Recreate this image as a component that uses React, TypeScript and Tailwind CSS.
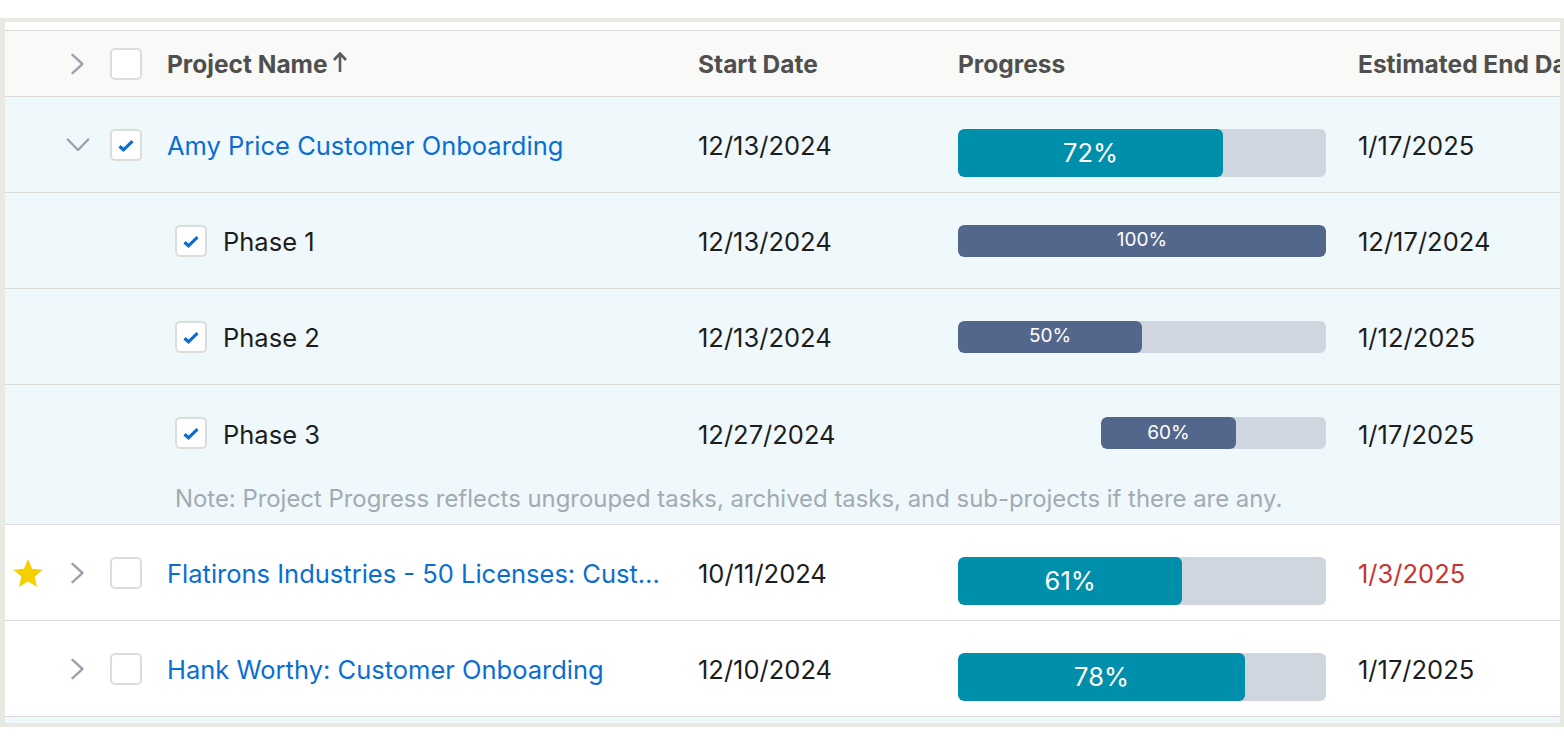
import type { ReactNode } from "react";

const FONT = { fontFamily: "Inter, 'Noto Sans', Arial, sans-serif" };

function Chevron({ down = false }: { down?: boolean }) {
  return (
    <svg
      viewBox="0 0 24 24"
      className="h-[24px] w-[24px]"
      fill="none"
      stroke="#9aa3ad"
      strokeWidth={2.4}
      strokeLinecap="round"
      strokeLinejoin="round"
    >
      {down ? <path d="M1.8 6.5L12 17 22.2 6.5" /> : <path d="M6.5 2.8L16.5 12 6.5 21.2" />}
    </svg>
  );
}

function Checkbox({ checked = false }: { checked?: boolean }) {
  return (
    <div className="flex h-[32px] w-[32px] flex-none items-center justify-center rounded-[5px] border-2 border-[#dddcdc] bg-white">
      {checked && (
        <svg
          viewBox="0 0 16 16"
          className="mt-[2px] h-[16px] w-[16px]"
          fill="none"
          stroke="#0b6fd0"
          strokeWidth={3.2}
          strokeLinejoin="miter"
        >
          <path d="M1.5 8.2l4 3.6 9-8.6" />
        </svg>
      )}
    </div>
  );
}

function Star() {
  return (
    <svg viewBox="0 0 24 24" className="h-[32px] w-[32px]" fill="#f5d000">
      <path d="M12 1.5l3.1 7.3 7.9.7-6 5.2 1.8 7.8L12 18.4l-6.8 4.1L7 14.7 1 9.5l7.9-.7z" />
    </svg>
  );
}

function Bar({
  pct,
  big = false,
  offset = 0,
  width = 368,
}: {
  pct: number;
  big?: boolean;
  offset?: number;
  width?: number;
}) {
  return (
    <div className={`flex w-[368px] ${big ? "mt-4" : ""}`}>
      <div style={{ width: offset }} className="flex-none" />
      <div
        style={{ width }}
        className={`flex overflow-hidden rounded-[6px] bg-[#cfd6e0] ${big ? "h-[48px]" : "h-[32px]"}`}
      >
        <div
          style={{ width: `${pct}%` }}
          className={`flex items-center justify-center rounded-[6px] text-white ${
            big ? "bg-[#008fab] pt-[2px] text-[25.5px]" : "bg-[#53668b] text-[19px]"
          }`}
        >
          {pct}%
        </div>
      </div>
    </div>
  );
}

function Row({
  bg = "bg-white",
  lead,
  start,
  bar,
  end,
  endRed = false,
}: {
  bg?: string;
  lead: ReactNode;
  start: string;
  bar: ReactNode;
  end: string;
  endRed?: boolean;
}) {
  return (
    <div className={`flex h-[96px] flex-none items-center border-b border-[#dddada] ${bg}`}>
      {lead}
      <div className="w-[260px] flex-none pt-[4px] text-[25.5px] text-[#1d1d1d]">{start}</div>
      <div className="flex w-[400px] flex-none">{bar}</div>
      <div
        className={`w-[300px] flex-none pt-[4px] text-[25.5px] ${endRed ? "text-[#c8342f]" : "text-[#1d1d1d]"}`}
      >
        {end}
      </div>
    </div>
  );
}

function ParentLead({
  star = false,
  open = false,
  checked = false,
  name,
}: {
  star?: boolean;
  open?: boolean;
  checked?: boolean;
  name: string;
}) {
  return (
    <div className="flex w-[693px] flex-none items-center">
      <div className="flex w-[45px] flex-none justify-center">{star && <Star />}</div>
      <div className="flex w-[55px] flex-none justify-center">
        <Chevron down={open} />
      </div>
      <div className="ml-[5px]">
        <Checkbox checked={checked} />
      </div>
      <div className="ml-[25px] w-[531px] flex-none pr-[32px] pt-[4px]">
        <div className="truncate text-[25.5px] text-[#0a6ed1]">{name}</div>
      </div>
    </div>
  );
}

function PhaseLead({ name }: { name: string }) {
  return (
    <div className="flex w-[693px] flex-none items-center pl-[170px]">
      <Checkbox checked />
      <div className="ml-[16px] pt-[4px] text-[25.5px] text-[#1d1d1d]">{name}</div>
    </div>
  );
}

export default function App() {
  return (
    <div className="min-h-screen bg-white pt-[18px]" style={FONT}>
      <div className="flex h-[709px] flex-col overflow-hidden border-4 border-l-[5px] border-[#e9e9e4] pt-[8px]">
        {/* header */}
        <div className="flex h-[67px] flex-none items-center border-y border-[#dddada] bg-[#f9f9f7] text-[24.5px] font-bold text-[#4f4f4f]">
          <div className="flex w-[693px] flex-none items-center">
            <div className="w-[45px] flex-none" />
            <div className="flex w-[55px] flex-none justify-center">
              <Chevron />
            </div>
            <div className="ml-[5px]">
              <Checkbox />
            </div>
            <div className="ml-[25px] flex items-center pt-[2px]">
              Project Name
              <svg
                viewBox="0 0 16 22"
                className="mb-[6px] ml-[4px] h-[22px] w-[16px]"
                fill="none"
                stroke="#5b5b5b"
                strokeWidth={2.6}
                strokeLinejoin="round"
              >
                <path d="M8 21V3M2 9l6-6.5 6 6.5" />
              </svg>
            </div>
          </div>
          <div className="w-[260px] flex-none pt-[2px]">Start Date</div>
          <div className="w-[400px] flex-none pt-[2px]">Progress</div>
          <div className="w-[300px] flex-none whitespace-nowrap pt-[2px]">Estimated End Date</div>
        </div>

        <Row
          bg="bg-[#eff8fb]"
          lead={<ParentLead open checked name="Amy Price Customer Onboarding" />}
          start="12/13/2024"
          bar={<Bar pct={72} big />}
          end="1/17/2025"
        />
        <Row
          bg="bg-[#eff8fb]"
          lead={<PhaseLead name="Phase 1" />}
          start="12/13/2024"
          bar={<Bar pct={100} />}
          end="12/17/2024"
        />
        <Row
          bg="bg-[#eff8fb]"
          lead={<PhaseLead name="Phase 2" />}
          start="12/13/2024"
          bar={<Bar pct={50} />}
          end="1/12/2025"
        />
        <div className="flex h-[140px] flex-none flex-col border-b border-[#dddada] bg-[#eff8fb]">
          <div className="flex h-[96px] flex-none items-center">
            <PhaseLead name="Phase 3" />
            <div className="w-[260px] flex-none pt-[4px] text-[25.5px] text-[#1d1d1d]">12/27/2024</div>
            <div className="flex w-[400px] flex-none">
              <Bar pct={60} offset={143} width={225} />
            </div>
            <div className="w-[300px] flex-none pt-[4px] text-[25.5px] text-[#1d1d1d]">1/17/2025</div>
          </div>
          <div className="whitespace-nowrap pl-[170px] pt-[3px] text-[23.9px] leading-[30px] text-[#a2abb4]">
            Note: Project Progress reflects ungrouped tasks, archived tasks, and sub-projects if there are any.
          </div>
        </div>
        <Row
          lead={<ParentLead star name="Flatirons Industries - 50 Licenses: Customer Onboarding" />}
          start="10/11/2024"
          bar={<Bar pct={61} big />}
          end="1/3/2025"
          endRed
        />
        <Row
          lead={<ParentLead name="Hank Worthy: Customer Onboarding" />}
          start="12/10/2024"
          bar={<Bar pct={78} big />}
          end="1/17/2025"
        />
        <div className="h-[95px] flex-none bg-[#eff8fb]" />
      </div>
    </div>
  );
}
